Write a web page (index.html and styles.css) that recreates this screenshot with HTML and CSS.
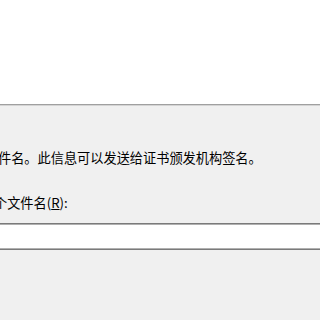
FILE: index.html
```html
<!DOCTYPE html>
<html lang="zh-CN">
<head>
<meta charset="utf-8">
<link rel="stylesheet" href="styles.css">
</head>
<body>
<div class="header"></div>
<div class="rule"></div>
<div class="content">
  <p class="line line-desc">件名。此信息可以发送给证书颁发机构签名。</p>
  <p class="line line-label">个文件名(<u>R</u>):</p>
  <div class="field"></div>
</div>
</body>
</html>
```
FILE: styles.css
```css
html, body {
  margin: 0;
  padding: 0;
}
body {
  width: 320px;
  height: 320px;
  overflow: hidden;
  background: #f0f0f0;
  font-family: "Noto Sans CJK SC", "Noto Sans", sans-serif;
  font-size: 13.2px;
  color: #000;
}
.header {
  height: 104px;
  background: #fff;
}
.rule {
  height: 0;
  border-top: 1px solid #a0a0a0;
  border-bottom: 1px solid #d4d4d4;
}
.content {
  padding-top: 42px;
}
.line {
  margin: 0;
  height: 20px;
  line-height: 20px;
  white-space: nowrap;
}
.line-desc {
  margin-left: -2px;
}
.line-label {
  margin-top: 25px;
  margin-left: -6px;
}
.field {
  margin-top: 10px;
  margin-left: -4px;
  width: 340px;
  height: 25px;
  background: #fff;
  border-top: 1px solid #7a7a7a;
  border-bottom: 1px solid #7a7a7a;
  box-shadow: inset 0 1px 0 #b0b0b0, inset 0 -1px 0 #b0b0b0;
}
```
